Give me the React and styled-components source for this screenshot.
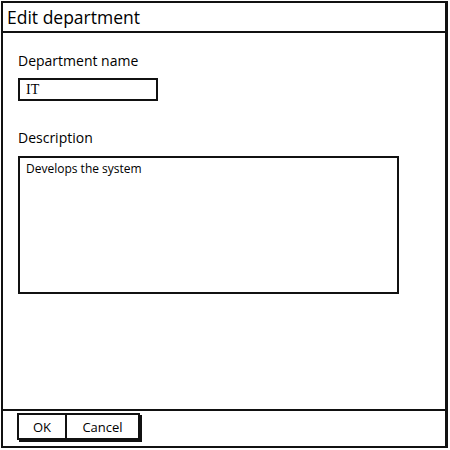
import React from "react";
import styled, { createGlobalStyle } from "styled-components";

const Global = createGlobalStyle`
  html, body { margin: 0; padding: 0; background: #fff; }
  body { font-family: "Open Sans", "Noto Sans", sans-serif; color: #000; }
`;

const Window = styled.div`
  box-sizing: border-box;
  margin: 1px 0 0 1px;
  width: 447px;
  height: 447px;
  border: 2px solid #111;
  border-right-width: 3px;
  display: flex;
  flex-direction: column;
`;

const TitleBar = styled.div`
  box-sizing: border-box;
  height: 30px;
  border-bottom: 2px solid #111;
  padding: 0 0 0 4px;
  display: flex;
  align-items: center;
  font-size: 17.5px;
`;

const Body = styled.div`
  flex: 1;
  padding: 18px 0 0 15px;
  display: flex;
  flex-direction: column;
`;

const Label = styled.div`
  font-size: 14px;
  line-height: 20px;
  margin-bottom: ${(p) => p.$gap || 6}px;
  margin-top: ${(p) => p.$top || 0}px;
`;

const TextInput = styled.div`
  box-sizing: border-box;
  width: 140px;
  height: 23px;
  border: 2px solid #111;
  padding: 0 0 0 6px;
  font-family: "Liberation Serif", serif;
  font-size: 14px;
  line-height: 19px;
`;

const TextArea = styled.div`
  box-sizing: border-box;
  width: 381px;
  height: 138px;
  border: 2px solid #111;
  padding: 3px 0 0 6px;
  font-size: 12px;
  line-height: 16px;
`;

const Footer = styled.div`
  box-sizing: border-box;
  height: 37px;
  border-top: 2px solid #111;
  padding: 2px 0 0 14px;
`;

const ButtonGroup = styled.div`
  display: inline-flex;
  border: 2px solid #111;
  box-shadow: 2px 2px 0 #111;
  height: 23px;
  box-sizing: content-box;
`;

const Button = styled.div`
  width: ${(p) => p.$w}px;
  display: flex;
  align-items: center;
  justify-content: center;
  font-size: 13px;
  & + & { border-left: 2px solid #111; }
`;

export default function App() {
  return (
    <>
      <Global />
      <Window>
        <TitleBar>Edit department</TitleBar>
        <Body>
          <Label $gap={7}>Department name</Label>
          <TextInput>IT</TextInput>
          <Label $top={27} $gap={8}>Description</Label>
          <TextArea>Develops the system</TextArea>
        </Body>
        <Footer>
          <ButtonGroup>
            <Button $w={46}>OK</Button>
            <Button $w={71}>Cancel</Button>
          </ButtonGroup>
        </Footer>
      </Window>
    </>
  );
}
